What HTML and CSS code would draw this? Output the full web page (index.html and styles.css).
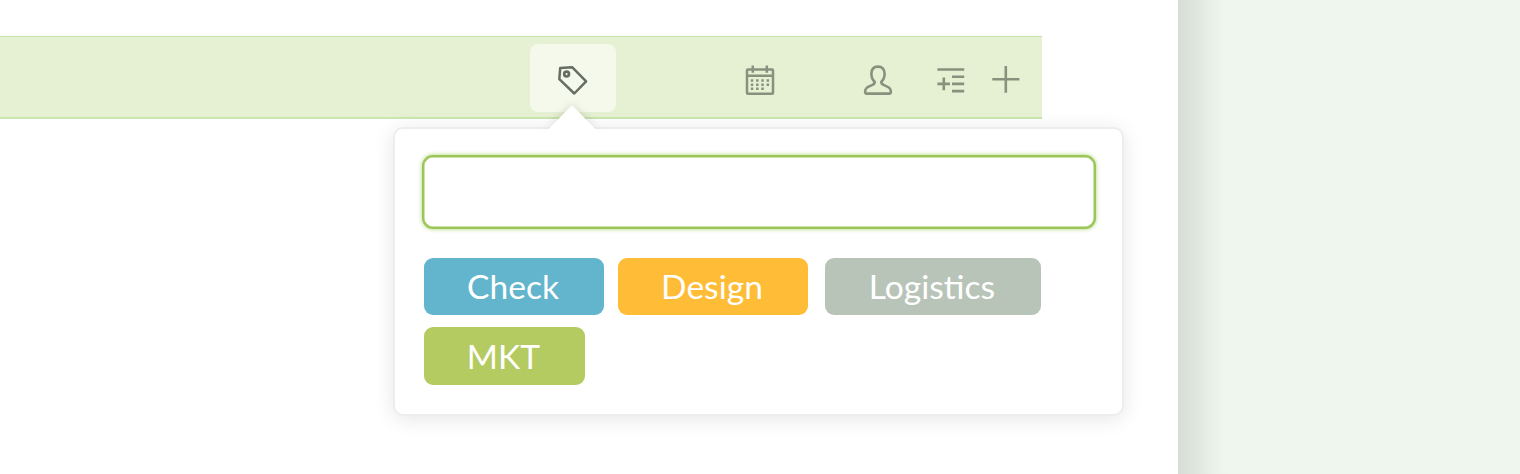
FILE: index.html
```html
<!DOCTYPE html>
<html lang="en">
<head>
<meta charset="utf-8">
<title>Task tags</title>
<link rel="stylesheet" href="styles.css">
</head>
<body>
<main class="sheet">
  <div class="task-bar">
    <button class="tool tool-active" aria-label="Tags">
      <svg width="32" height="32" viewBox="0 0 32 32" fill="none" stroke="#666e63" stroke-width="2.5" stroke-linejoin="round"><path d="M3.2 4.1 15.1 3.2 29.1 17.3 17.3 29.5 2.3 15.2Z"/><circle cx="9.6" cy="10.1" r="2.4" stroke-width="2.7"/></svg>
    </button>
    <button class="tool tool-date" aria-label="Due date">
      <svg width="30" height="32" viewBox="0 0 30 32" fill="none" stroke="#87917d" stroke-width="2.5"><rect x="2" y="5.5" width="26" height="24.3" rx="1"/><path d="M2 11.8H28M7.8 1.4V8.8M21.8 1.4V8.8"/><path stroke-dasharray="2.5 2.75" d="M5.8 16.6H25M5.8 20.7H25M5.8 24.8H19.5"/></svg>
    </button>
    <button class="tool tool-user" aria-label="Assignee">
      <svg width="30" height="32" viewBox="0 0 30 32" fill="none" stroke="#87917d" stroke-width="2.6" stroke-linejoin="round"><path d="M15 2.6C10.6 2.6 8.4 5.6 8.4 9.8C8.4 13.4 9.7 16.1 11.6 17.7C12.2 19.6 10.8 20.5 8.5 21.4C4.2 23 2.1 24.2 2.1 27.8C2.1 29 2.5 29.6 3.7 29.6H26.3C27.5 29.6 27.9 29 27.9 27.8C27.9 24.2 25.8 23 21.5 21.4C19.2 20.5 17.8 19.6 18.4 17.7C20.3 16.1 21.6 13.4 21.6 9.8C21.6 5.6 19.4 2.6 15 2.6Z"/></svg>
    </button>
    <button class="tool tool-subtask" aria-label="Add subtask">
      <svg width="28" height="28" viewBox="0 0 28 28" fill="none" stroke="#87917d" stroke-width="2.6"><path d="M0.4 3.5H27.2M15 10.7H27.2M15 17.9H27.2M15 25.1H27.2M0.4 17.9H13M6.8 11.5V24.2"/></svg>
    </button>
    <button class="tool tool-add" aria-label="Add">
      <svg width="28" height="28" viewBox="0 0 28 28" fill="none" stroke="#87917d" stroke-width="2.6"><path d="M0.3 13.3H27.4M13.8 0V26.8"/></svg>
    </button>
  </div>
  <section class="popover">
    <svg class="arrow" width="50" height="25" viewBox="0 0 50 25"><path d="M0 25 2 23.5 24 1.2Q25 .4 26 1.2L48 23.5 50 25Z" fill="#fff"/></svg>
    <input class="tag-input" type="text" aria-label="Tag name">
    <div class="tags">
      <span class="tag tag-check">Check</span>
      <span class="tag tag-design">Design</span>
      <span class="tag tag-logistics">Logistics</span>
      <span class="tag tag-mkt">MKT</span>
    </div>
  </section>
</main>
</body>
</html>
```
FILE: styles.css
```css
* { box-sizing: border-box; }
body {
  margin: 0;
  height: 474px;
  overflow: hidden;
  background: linear-gradient(90deg, #d5ddd5, #dfe6df 18px, #e8f0e8 33px, #edf5ed 44px, #eef6ee 56px) 1178px 0 no-repeat;
  font-family: Lato, Carlito, sans-serif;
}
.sheet {
  width: 1178px;
  height: 474px;
  padding-top: 36px;
  background: #fff;
}
.task-bar {
  display: flex;
  align-items: flex-start;
  width: 1042px;
  height: 83px;
  padding: 7px 0 0 530px;
  background: #e6f1d3;
  border-top: 1px solid #c5e5a8;
  border-bottom: 2px solid #cbe5ae;
}
.tool {
  display: flex;
  align-items: center;
  justify-content: center;
  height: 68px;
  padding: 4px 0 0;
  border: 0;
  background: none;
}
.tool svg { display: block; }
.tool-active {
  width: 86px;
  border-radius: 8px;
  background: #f4f9eb;
}
.tool-date { margin-left: 129px; }
.tool-user { margin-left: 88px; }
.tool-subtask { margin-left: 44px; }
.tool-add { margin-left: 27px; }
.popover {
  position: relative;
  width: 731px;
  height: 289px;
  margin: 8px 0 0 393px;
  padding: 26px 26px 26px 27px;
  background: #fff;
  border: 2px solid #ededed;
  border-radius: 10px;
  box-shadow: 0 3px 20px rgba(0, 0, 0, .1);
}
.arrow {
  position: absolute;
  left: 152px;
  top: -24px;
  filter: drop-shadow(0 -1px 4px rgba(0, 0, 0, .12));
  clip-path: inset(-8px -8px 0 -8px);
}
.tag-input {
  display: block;
  width: 674px;
  height: 74px;
  padding: 0 16px;
  border: 2px solid #9ac658;
  border-radius: 11px;
  outline: 0;
  background: #fff;
  box-shadow: inset 0 0 0 .5px #9ac658, 0 0 4px rgba(154, 204, 88, .8);
  font: inherit;
}
.tags {
  display: flex;
  flex-wrap: wrap;
  row-gap: 12px;
  padding: 28.6px 0 0 2px;
}
.tag {
  height: 57.5px;
  padding-right: 2px;
  border-radius: 9px;
  color: #fff;
  font-size: 33.6px;
  line-height: 57px;
  text-align: center;
}
.tag-check { width: 180px; margin-right: 14px; background: #62b5cc; }
.tag-design { width: 190px; margin-right: 17px; background: #ffbc36; }
.tag-logistics { width: 216px; background: #b9c4b9; font-feature-settings: "dlig"; }
.tag-mkt { width: 161px; background: #b4cb61; line-height: 59px; }
```
